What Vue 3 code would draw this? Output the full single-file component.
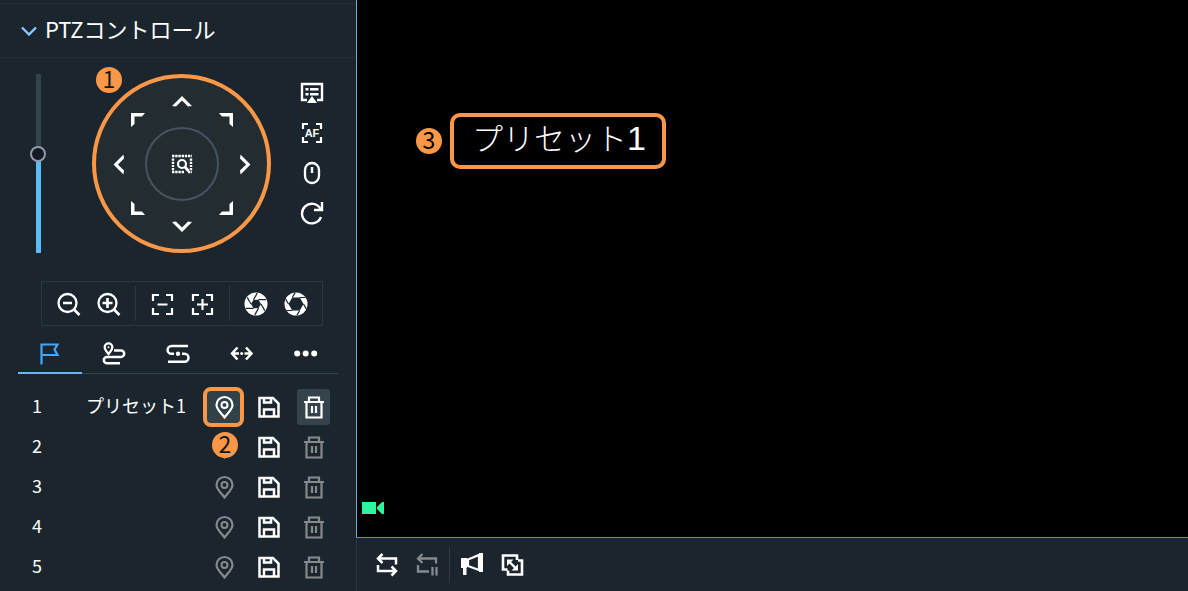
<script setup>
import { ref } from 'vue'

const zoom = ref(56)
const activeTab = ref('flag')

const directions = [
  { id: 'up-left', label: '左上' },
  { id: 'up', label: '上' },
  { id: 'up-right', label: '右上' },
  { id: 'left', label: '左' },
  { id: 'center', label: '3D位置決め' },
  { id: 'right', label: '右' },
  { id: 'down-left', label: '左下' },
  { id: 'down', label: '下' },
  { id: 'down-right', label: '右下' },
]

const sideTools = [
  { icon: 'menu', label: 'メニュー' },
  { icon: 'af', label: 'オートフォーカス', text: 'AF' },
  { icon: 'mouse', label: 'マウス' },
  { icon: 'refresh', label: '更新' },
]

const lensTools = [
  [{ icon: 'zoom-out', label: 'ズームアウト' }, { icon: 'zoom-in', label: 'ズームイン' }],
  [{ icon: 'focus-out', label: 'フォーカス −' }, { icon: 'focus-in', label: 'フォーカス +' }],
  [{ icon: 'iris-close', label: 'アイリス −' }, { icon: 'iris-open', label: 'アイリス +' }],
]

const tabs = [
  { icon: 'flag', label: 'プリセット' },
  { icon: 'route', label: 'ツアー' },
  { icon: 'pattern', label: 'パターン' },
  { icon: 'scan', label: 'スキャン' },
  { icon: 'more', label: 'その他' },
]

const presets = ref([
  { id: 1, name: 'プリセット1' },
  { id: 2, name: '' },
  { id: 3, name: '' },
  { id: 4, name: '' },
  { id: 5, name: '' },
])

const blades = [0, 60, 120, 180, 240, 300]
</script>

<template>
  <svg class="sprite" aria-hidden="true">
    <symbol id="chevron" viewBox="0 0 16 10"><path d="M1 1.5l7 7 7-7" fill="none" stroke="currentColor" stroke-width="2.4" /></symbol>
    <symbol id="menu" viewBox="0 0 24 24">
      <path d="M7 19H2V3h20v16h-5" fill="none" stroke="currentColor" stroke-width="2.4" />
      <path d="M5.5 7h3v2.5h-3zM10 7h8.5v2.5H10zM5.5 12h3v2.5h-3zM10 12h8.5v2.5H10zM12 15l5 7H7z" fill="currentColor" />
    </symbol>
    <symbol id="af" viewBox="0 0 24 24">
      <path d="M3 8V3h5M16 3h5v5M21 16v5h-5M8 21H3v-5" fill="none" stroke="currentColor" stroke-width="2.2" />
    </symbol>
    <symbol id="mouse" viewBox="0 0 24 24">
      <rect x="5" y="2" width="14" height="20" rx="7" fill="none" stroke="currentColor" stroke-width="2.3" />
      <path d="M12 6v6" stroke="currentColor" stroke-width="2.4" />
    </symbol>
    <symbol id="refresh" viewBox="0 0 24 24">
      <path d="M20.5 8A9.800 9.800 0 1 0 21 16" fill="none" stroke="currentColor" stroke-width="2.4" />
      <path d="M22 1v8h-8" fill="none" stroke="currentColor" stroke-width="2.4" />
    </symbol>
    <symbol id="zoom-out" viewBox="0 0 24 24">
      <path d="M16.500 17l6 6M6 11h9" stroke="currentColor" stroke-width="2.600" />
      <circle cx="10.500" cy="11" r="9" fill="none" stroke="currentColor" stroke-width="2.300" />
    </symbol>
    <symbol id="zoom-in" viewBox="0 0 24 24">
      <path d="M16.500 17l6 6M5.500 11h10M10.500 6v10" stroke="currentColor" stroke-width="2.600" />
      <circle cx="10.500" cy="11" r="9" fill="none" stroke="currentColor" stroke-width="2.300" />
    </symbol>
    <symbol id="focus-out" viewBox="0 0 24 24">
      <path d="M3 9V3h6M16 3h6v6M22 16v6h-6M9 22H3v-6M7.500 12.500h10" fill="none" stroke="currentColor" stroke-width="2.200" />
    </symbol>
    <symbol id="focus-in" viewBox="0 0 24 24">
      <path d="M3 9V3h6M16 3h6v6M22 16v6h-6M9 22H3v-6M7 12.500h11M12.500 7v11" fill="none" stroke="currentColor" stroke-width="2.200" />
    </symbol>
    <symbol id="iris-close" viewBox="0 0 24 24">
      <circle cx="12" cy="12" r="11.500" fill="currentColor" />
      <path d="M17 12l-2.500 4.330h-5L7 12l2.500-4.330h5z" class="hole" />
      <path v-for="a in blades" :key="a" d="M14.500 16.330L10.700 22.900" :transform="`rotate(${a} 12 12)`" class="blade" />
    </symbol>
    <symbol id="iris-open" viewBox="0 0 24 24">
      <circle cx="12" cy="12" r="11.500" fill="currentColor" />
      <path d="M19.500 12l-3.750 6.500h-7.500L4.500 12l3.750-6.500h7.500z" class="hole" />
      <path v-for="a in blades" :key="a" d="M15.750 18.500L12.900 23.400" :transform="`rotate(${a} 12 12)`" class="blade" />
    </symbol>
    <symbol id="flag" viewBox="0 0 24 24">
      <path d="M3.500 23.500V3.500h16L16.500 8.500l3 5.500h-16" fill="none" stroke="currentColor" stroke-width="2.200" />
    </symbol>
    <symbol id="route" viewBox="0 0 24 24">
      <path d="M12 9.500h7a3.200 3.200 0 0 1 0 6.400H5a3.200 3.200 0 0 0 0 6.400h13" fill="none" stroke="currentColor" stroke-width="2.500" />
      <path d="M6.500 13C4.500 10.500 2.700 8.500 2.700 6.200a3.800 3.800 0 0 1 7.600 0c0 2.300-1.800 4.300-3.800 6.800z" fill="none" stroke="currentColor" stroke-width="2.300" />
      <circle cx="6.500" cy="6.200" r="1" fill="currentColor" />
    </symbol>
    <symbol id="pattern" viewBox="0 0 24 24">
      <path d="M22 5H5.500a3.900 3.900 0 0 0 0 7.800H8M16 12.800h2.500a3.900 3.900 0 0 1 0 8H2" fill="none" stroke="currentColor" stroke-width="2.500" />
      <circle cx="12" cy="12.800" r="2.200" fill="currentColor" />
    </symbol>
    <symbol id="scan" viewBox="0 0 24 24">
      <path d="M7.500 6.500L2 12.500l5.500 6M16 6.500l5.500 6-5.500 6M2 12.500h7M14.500 12.500h7" fill="none" stroke="currentColor" stroke-width="2.500" />
      <circle cx="11.700" cy="12.500" r="1.500" fill="currentColor" />
    </symbol>
    <symbol id="more" viewBox="0 0 24 24">
      <g fill="currentColor"><circle cx="3.200" cy="12.500" r="3" /><circle cx="11.700" cy="12.500" r="3" /><circle cx="20.200" cy="12.500" r="3" /></g>
    </symbol>
    <symbol id="pin" viewBox="0 0 24 24">
      <path d="M12.500 22.500C9 18 4.500 14 4.500 10a8 8 0 0 1 16 0c0 4-4.500 8-8 12.500z" fill="none" stroke="currentColor" stroke-width="2.200" />
      <circle cx="12.500" cy="10" r="3" fill="none" stroke="currentColor" stroke-width="2" />
    </symbol>
    <symbol id="save" viewBox="0 0 24 24">
      <path d="M2.500 3h13.500l5.500 5.500v13h-19zM7 21.500v-7h10v7M7 3v4.500h7V3" fill="none" stroke="currentColor" stroke-width="2.500" />
    </symbol>
    <symbol id="trash" viewBox="0 0 24 24">
      <path d="M2 7h20M4.500 7v15.500h15V7M7 7V2.500h10V7M10 11v7M14 11v7" fill="none" stroke="currentColor" stroke-width="2.200" />
    </symbol>
    <symbol id="arrow" viewBox="0 0 20 11"><path d="M0 10L10 0l10 10-4 .5-6-6-6 6z" fill="currentColor" /></symbol>
    <symbol id="corner" viewBox="0 0 14 14"><path d="M0 14V0h14l-3 3.500H3.500V11z" fill="currentColor" /></symbol>
    <symbol id="locate" viewBox="0 0 22 20">
      <path d="M1 2h20M1 18h12M17 18h4" fill="none" stroke="currentColor" stroke-width="2.600" stroke-dasharray="2.400 .8" />
      <path d="M2 4.500v12M20 4.500v12" fill="none" stroke="currentColor" stroke-width="2.400" stroke-dasharray="2.200 1" />
      <circle cx="11" cy="10" r="4" fill="none" stroke="currentColor" stroke-width="2.200" />
      <path d="M13.500 12.500l4 4.500" stroke="currentColor" stroke-width="2.800" />
    </symbol>
    <symbol id="loop" viewBox="0 0 24 24">
      <path d="M7.500 1L3 5.500 7.500 10M3 5.500h18v6M16.500 13.500L21 18l-4.500 4.500M21 18H3v-6" fill="none" stroke="currentColor" stroke-width="2.500" />
    </symbol>
    <symbol id="loop-pause" viewBox="0 0 24 24">
      <path d="M7.500 1L3 5.500 7.500 10M3 5.500h18v5M3 12v6.500h11M17.500 14v8.500M21.500 14v8.500" fill="none" stroke="currentColor" stroke-width="2.300" />
    </symbol>
    <symbol id="horn" viewBox="0 0 24 24">
      <path d="M1 5h6v10H6.500v7H3v-7H1zM19 0h4v19h-4z" fill="currentColor" />
      <path d="M8 6.500L19 2v15L8 13z" fill="none" stroke="currentColor" stroke-width="2.200" />
    </symbol>
    <symbol id="resize" viewBox="0 0 24 24">
      <path d="M7.500 16.500h-4.500v-14h14v4.500M18 7.500h4v14H8V17.500" fill="none" stroke="currentColor" stroke-width="2.600" />
      <path d="M9 8.500l7 7" stroke="currentColor" stroke-width="2.400" />
      <path d="M7 6.500h6.500L7 13zM18 17.500h-6.500L18 11z" fill="currentColor" />
    </symbol>
    <symbol id="camera" viewBox="0 0 22 14"><path d="M0 1h14v12H0zM15 6l5-5h2v12h-2l-5-5z" fill="currentColor" /></symbol>
  </svg>

  <div class="app">
    <aside class="sidebar">
      <header class="panel-head">
        <button type="button" class="collapse" aria-expanded="true">
          <svg class="chevron"><use href="#chevron" /></svg>
          <span class="title">PTZコントロール</span>
        </button>
      </header>

      <section class="ptz">
        <input v-model="zoom" class="speed" type="range" min="0" max="100" aria-label="速度" :style="{ '--level': zoom + '%' }" />
        <div class="wheel-wrap">
          <div class="wheel">
            <button v-for="d in directions" :key="d.id" type="button" :class="['dir', d.id]" :aria-label="d.label">
              <svg><use :href="d.id === 'center' ? '#locate' : d.id.includes('-') ? '#corner' : '#arrow'" /></svg>
            </button>
          </div>
          <span class="badge badge-wheel">1</span>
        </div>
        <div class="side-tools">
          <button v-for="t in sideTools" :key="t.icon" type="button" class="tool stack" :aria-label="t.label">
            <svg class="icon"><use :href="'#' + t.icon" /></svg>
            <span v-if="t.text" class="tool-text">{{ t.text }}</span>
          </button>
        </div>
      </section>

      <div class="lens">
        <div v-for="(group, i) in lensTools" :key="i" class="lens-group">
          <button v-for="t in group" :key="t.icon" type="button" class="tool" :aria-label="t.label">
            <svg class="icon"><use :href="'#' + t.icon" /></svg>
          </button>
        </div>
      </div>

      <nav class="tabs">
        <button v-for="t in tabs" :key="t.icon" type="button" :class="['tab', { active: activeTab === t.icon }]" :aria-label="t.label" @click="activeTab = t.icon">
          <svg class="icon"><use :href="'#' + t.icon" /></svg>
        </button>
      </nav>

      <table class="presets">
        <tbody>
          <tr v-for="p in presets" :key="p.id">
            <td class="num">{{ p.id }}</td>
            <td class="name">{{ p.name }}</td>
            <td class="act">
              <button type="button" :class="['row-btn', 'go', { on: p.name }]" :disabled="!p.name" aria-label="移動"><svg class="icon"><use href="#pin" /></svg></button>
              <span v-if="p.id === 1" class="badge badge-pin">2</span>
            </td>
            <td class="act">
              <button type="button" class="row-btn" aria-label="保存"><svg class="icon"><use href="#save" /></svg></button>
            </td>
            <td class="act">
              <button type="button" :class="['row-btn', 'del', { on: p.name }]" :disabled="!p.name" aria-label="削除"><svg class="icon"><use href="#trash" /></svg></button>
            </td>
          </tr>
        </tbody>
      </table>
    </aside>

    <main class="main">
      <section class="video">
        <div class="osd">
          <span class="badge">3</span>
          <div class="osd-text">プリセット<span class="osd-num">1</span></div>
        </div>
        <svg class="camera"><use href="#camera" /></svg>
      </section>
      <footer class="bar">
        <button type="button" class="tool" aria-label="切り替え"><svg class="icon"><use href="#loop" /></svg></button>
        <button type="button" class="tool dim" disabled aria-label="一時停止"><svg class="icon"><use href="#loop-pause" /></svg></button>
        <span class="divider"></span>
        <button type="button" class="tool" aria-label="音声"><svg class="icon"><use href="#horn" /></svg></button>
        <button type="button" class="tool" aria-label="ウィンドウ"><svg class="icon"><use href="#resize" /></svg></button>
      </footer>
    </main>
  </div>
</template>

<style>
body {
  margin: 0;
  background: #1a252d;
}
</style>

<style scoped>
.sprite {
  position: absolute;
  width: 0;
  height: 0;
}
.app {
  display: flex;
  min-height: 100vh;
  background: #1a252d;
  color: #fff;
  font-family: "Noto Sans CJK JP", sans-serif;
}
button {
  display: flex;
  align-items: center;
  justify-content: center;
  margin: 0;
  padding: 0;
  border: 0;
  background: none;
  color: inherit;
  font: inherit;
}
svg {
  display: block;
}
.icon {
  width: 24px;
  height: 24px;
}
.hole {
  fill: #1a252d;
}
.blade {
  stroke: #1a252d;
  stroke-width: 1.2;
}
.sidebar {
  flex: 0 0 356px;
  box-sizing: border-box;
  padding-top: 3px;
}
.panel-head {
  display: flex;
  height: 53px;
  padding-left: 21px;
  border-top: 1px solid #242e32;
  border-bottom: 1px solid #242e32;
}
.collapse {
  gap: 8px;
  font-size: 22px;
  line-height: 32px;
}
.title {
  padding-bottom: 6px;
}
.chevron {
  width: 16px;
  height: 10px;
  color: #8cc6ff;
}
.ptz {
  display: flex;
  padding: 16px 0 0 30px;
}
.speed {
  appearance: none;
  writing-mode: vertical-lr;
  direction: rtl;
  width: 16px;
  height: 179px;
  margin: 0;
  background: linear-gradient(to top, #5bbcf7 var(--level), #34434b var(--level)) center / 5px 100% no-repeat;
}
.speed::-webkit-slider-thumb {
  appearance: none;
  box-sizing: border-box;
  width: 16px;
  height: 16px;
  border: 2px solid #9199aa;
  border-radius: 50%;
  background: #141a1f;
}
.wheel-wrap {
  position: relative;
  margin: 0 21px 0 46px;
}
.wheel {
  display: grid;
  grid-template: 1fr 74px 1fr / 1fr 74px 1fr;
  box-sizing: border-box;
  width: 179px;
  height: 179px;
  padding: 1px 0 0 1px;
  border: 4px solid #fb9747;
  border-radius: 50%;
  background: #222c31;
}
.dir {
  place-self: center;
}
.dir svg {
  width: 20px;
  height: 11px;
}
.up {
  align-self: start;
  padding-top: 17px;
}
.down {
  align-self: end;
  padding-bottom: 17px;
}
.down svg {
  transform: rotate(180deg);
}
.left {
  justify-self: start;
  padding-left: 12px;
}
.left svg {
  transform: rotate(-90deg);
}
.right {
  justify-self: end;
  padding-right: 12px;
}
.right svg {
  transform: rotate(90deg);
}
.up-left svg,
.up-right svg,
.down-left svg,
.down-right svg {
  width: 14px;
  height: 14px;
}
.up-left {
  place-self: end;
}
.up-right {
  place-self: end start;
}
.up-right svg {
  transform: rotate(90deg);
}
.down-left {
  place-self: start end;
}
.down-left svg {
  transform: rotate(-90deg);
}
.down-right {
  place-self: start;
}
.down-right svg {
  transform: rotate(180deg);
}
.center {
  box-sizing: border-box;
  width: 74px;
  height: 74px;
  border: 2px solid #465361;
  border-radius: 50%;
}
.center svg {
  width: 22px;
  height: 20px;
}
.badge {
  width: 26px;
  height: 26px;
  border-radius: 50%;
  background: #fb9747;
  color: #11181d;
  font-size: 23px;
  font-weight: 400;
  line-height: 23px;
  text-align: center;
}
.badge-wheel {
  position: absolute;
  top: -7px;
  left: 4px;
}
.side-tools {
  margin-top: -1px;
}
.tool {
  width: 40px;
  height: 40px;
}
.stack {
  display: grid;
  place-items: center;
  place-content: center;
}
.stack > * {
  grid-area: 1 / 1;
}
.tool-text {
  font: bold 11px/14px "Liberation Sans", sans-serif;
}
.lens {
  display: grid;
  grid-template-columns: repeat(3, 1fr);
  height: 43px;
  margin: 28px 33px 0 41px;
  border: 1px solid #2b3840;
}
.lens-group {
  display: flex;
  align-items: center;
  justify-content: center;
}
.lens .tool {
  height: 34px;
}
.lens-group + .lens-group {
  margin: 4px 0;
  border-left: 1px solid #2b3840;
}
.tabs {
  display: grid;
  grid-template-columns: repeat(5, 1fr);
  margin: 8px 18px 0;
  box-shadow: inset 0 -1px #34434b;
}
.tab {
  height: 40px;
  border-bottom: 2px solid transparent;
}
.tab.active {
  border-color: #5bbcf7;
  color: #45a5f8;
}
.presets {
  width: 318px;
  margin: 13px 19px 0 18px;
  border-collapse: collapse;
  table-layout: fixed;
  font-size: 18px;
  line-height: 26px;
}
.presets td {
  box-sizing: border-box;
  height: 40px;
  padding: 0;
}
.presets .num {
  width: 38px;
  padding-bottom: 4px;
  text-align: center;
}
.presets .name {
  padding: 0 15px 4px 0;
  text-align: right;
}
.presets .act {
  position: relative;
  width: 45px;
}
.row-btn {
  box-sizing: border-box;
  width: 41px;
  height: 40px;
  margin: 0 auto;
}
.row-btn:disabled,
.dim {
  color: #858a8d;
}
.go.on {
  border: 4px solid #fb9747;
  border-radius: 8px;
  background: #31414a;
}
.del.on {
  width: 33px;
  height: 36px;
  border-radius: 3px;
  background: #34434c;
}
.badge-pin {
  position: absolute;
  z-index: 1;
  top: 45px;
  left: 11px;
}
.main {
  display: flex;
  flex: 1;
  flex-direction: column;
  min-width: 0;
}
.video {
  display: flex;
  flex: 1;
  flex-direction: column;
  align-items: flex-start;
  justify-content: space-between;
  border-bottom: 1px solid #5f87b5;
  border-left: 1px solid #6ea3d8;
  background: #000;
}
.osd {
  display: flex;
  align-items: center;
  gap: 8px;
  margin: 113px 0 0 59px;
}
.osd .badge {
  color: #000;
}
.osd-text {
  padding: 0 16px 8px 18px;
  border: 4px solid #fb9747;
  border-radius: 10px;
  font-size: 31px;
  font-weight: 300;
  line-height: 40px;
}
.osd-num {
  font-family: "Liberation Sans", sans-serif;
  font-size: 34px;
  line-height: 1;
}
.camera {
  width: 22px;
  height: 14px;
  margin: 0 0 22px 5px;
  color: #2cf59d;
}
.bar {
  display: flex;
  align-items: center;
  height: 53px;
  padding-left: 10px;
  border-left: 1px solid #2b3840;
}
.divider {
  width: 1px;
  height: 36px;
  margin: 0 2px;
  background: #2f3c46;
}
</style>
